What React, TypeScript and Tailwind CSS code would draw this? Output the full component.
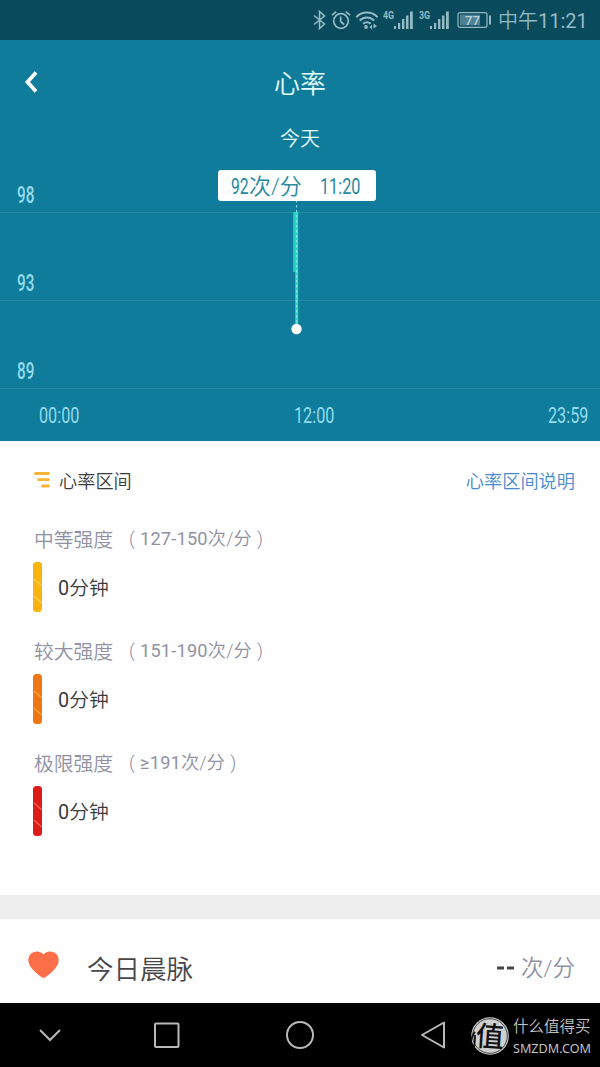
import React from "react";

const SANS = "font-[Roboto,'Noto_Sans_CJK_SC',sans-serif]";

function Signal({ label }: { label: string }) {
  return (
    <svg width="31" height="22" viewBox="0 0 31 22" className="shrink-0" fill="currentColor">
      <text x="0" y="9.5" fontSize="11.5" fontWeight="700" textLength="11" lengthAdjust="spacingAndGlyphs">
        {label}
      </text>
      <rect x="11" y="17" width="2" height="3" />
      <rect x="15" y="14" width="2.2" height="6" />
      <rect x="19" y="10" width="2.4" height="10" />
      <rect x="23" y="6.5" width="2.5" height="13.5" />
      <rect x="27" y="2.5" width="2.8" height="17.5" />
    </svg>
  );
}

function StatusBar() {
  return (
    <div className="flex h-10 w-full shrink-0 items-center bg-[#094b5d] pl-[313px] text-[#93bac5]">
      <svg width="13" height="20" viewBox="0 0 13 20" fill="none" stroke="currentColor" strokeWidth="1.6">
        <path d="M1 5.5 11.5 14 6.5 18.5V1.5L11.5 6 1 14.5" />
      </svg>
      <svg width="20" height="20" viewBox="0 0 20 20" fill="none" stroke="currentColor" strokeWidth="1.7" className="ml-[5px]">
        <circle cx="10" cy="11" r="7.3" />
        <path d="M9.7 6.5v5l3.3 3M1 5.2 5.2 1.6M19 5.2 14.8 1.6" />
      </svg>
      <svg width="24" height="20" viewBox="0 0 24 20" fill="none" stroke="currentColor" strokeWidth="2" className="ml-[4px]">
        <path d="M1.2 7.2C7 .9 16.8.9 22.6 7.2M4.6 10.6c4-4.2 10.6-4.2 14.6 0M8.2 13.8c2-2.1 5.4-2.1 7.4 0" />
        <circle cx="11" cy="17" r="1.9" fill="currentColor" stroke="none" />
        <path d="M17 14.5v5l-2.500-2.500zM18.500 13.500v5l3.500-2.500z" fill="currentColor" stroke="none" />
      </svg>
      <div className="ml-[4px] flex gap-[5px] font-[Roboto,sans-serif]">
        <Signal label="4G" />
        <Signal label="3G" />
      </div>
      <svg width="35" height="18" viewBox="0 0 35 18" className="ml-[7px] font-[Roboto,sans-serif]">
        <rect x="1" y="1.7" width="29" height="14.6" rx="2" fill="none" stroke="currentColor" strokeWidth="1.2" />
        <rect x="3" y="3.6" width="20" height="10.8" fill="#4b8191" />
        <text x="8" y="13.8" fontSize="13.5" fontWeight="500" fill="#b5d0d8" textLength="15" lengthAdjust="spacingAndGlyphs">77</text>
        <rect x="32" y="4.5" width="2" height="9" fill="currentColor" />
      </svg>
      <span className="mt-[2px] ml-[6px] text-[20px] leading-10 font-[350] whitespace-nowrap">
        中午<span className="font-normal">11:21</span>
      </span>
    </div>
  );
}

function GridRow({ value, first = false }: { value: string; first?: boolean }) {
  return (
    <div
      className={`flex items-end border-b border-[#2488a5] pb-[5px] pl-[17px] text-[23.5px] leading-6 text-[#93dbec] ${first ? "h-[60px]" : "h-[88px]"}`}
    >
      <span className="origin-left scale-x-[0.65] font-medium">{value}</span>
    </div>
  );
}

function AxisTime({ children }: { children: string }) {
  return (
    <span className="w-[41px] whitespace-nowrap">
      <span className="inline-block origin-left scale-x-[0.72]">{children}</span>
    </span>
  );
}

function Chart() {
  return (
    <div className="relative flex h-[288px] w-full flex-col">
      <GridRow value="98" first />
      <GridRow value="93" />
      <GridRow value="89" />
      <div className="flex h-[52px] items-center justify-between pt-px pr-[11px] pl-[39px] text-[22.5px] text-[#93dbec]">
        <AxisTime>00:00</AxisTime>
        <AxisTime>12:00</AxisTime>
        <AxisTime>23:59</AxisTime>
      </div>
      <svg className="absolute top-[47px] left-[284px]" width="24" height="138" viewBox="0 0 24 138" fill="none">
        <path d="M11 12v60" stroke="#24cfc5" strokeWidth="3.6" />
        <path d="M12.7 12v117" stroke="#2bd8c8" strokeWidth="3" />
        <path d="M12.6 0v129" stroke="#8bebdf" strokeWidth="1" strokeDasharray="2.5 2.5" />
        <circle cx="12.5" cy="129" r="5.2" fill="#fff" />
      </svg>
      <div className="absolute top-[17px] left-[218px] flex h-[31px] w-[158px] items-center rounded-[3px] bg-white pt-[2px] pl-[13px] text-[22.5px] leading-[31px] whitespace-nowrap text-[#26899e]">
        <span className="w-[18px]"><span className="inline-block origin-left scale-x-[0.7]">92</span></span>
        <span className="w-[74px] text-[22px] font-[350]">次/分</span>
        <span className="inline-block origin-left scale-x-[0.72]">11:20</span>
      </div>
    </div>
  );
}

type ZoneProps = { name: string; range: string; bar: string; light: string };

function Zone({ name, range, bar, light }: ZoneProps) {
  return (
    <div className="h-[112px] pl-[33px]">
      <div className="flex h-[30px] items-center whitespace-nowrap text-[#9092a3]">
        <span className="w-[92px] pt-[3px] pl-px text-[19.8px] font-[350]">{name}</span>
        <span className="flex text-[18.2px] font-[350]">
          <span className="w-[15px] pl-[4px]">(</span>
          <span className="tracking-[0.2px]">
            <span className="font-normal">{range}</span>
            次/分
          </span>
          <span className="ml-[5px]">)</span>
        </span>
      </div>
      <div className="mt-[8px] flex h-[50px] items-center">
        <svg width="9" height="50" viewBox="0 0 9 50">
          <rect width="9" height="50" rx="3.5" fill={bar} />
          <path d="M1 17l7.5 6.5M1 34l7.5 7" stroke={light} strokeWidth="1.2" />
        </svg>
        <span className="mt-[4px] ml-[16px] text-[19.8px] font-[350] text-[#3c3c40]">
          <span className="font-normal">0</span>分钟
        </span>
      </div>
    </div>
  );
}

function NavBar() {
  return (
    <div className="flex h-[64px] shrink-0 items-center bg-black text-[#b9b9b9]">
      <svg width="460" height="64" viewBox="0 0 460 64" fill="none" stroke="currentColor" strokeWidth="2">
        <path d="m40 27 10 10 10-10" />
        <rect x="155" y="20.5" width="23.5" height="23.5" rx="1" />
        <circle cx="300" cy="32" r="13" />
        <path d="M444 19.5v25l-22-12.5z" strokeLinejoin="round" />
      </svg>
      <svg width="42" height="42" viewBox="0 0 42 42" className="ml-[9px] shrink-0 font-['Noto_Sans_CJK_SC',sans-serif]">
        <circle cx="21" cy="22" r="18.8" fill="#cfcfcf" />
        <circle cx="21" cy="22" r="17.3" fill="none" stroke="#222" strokeWidth=".8" />
        <path d="M2 27c1-4 2-7 4-9M5 33c1-4 1-8 1-12" stroke="#111" strokeWidth="1.8" fill="none" />
        <text x="7" y="32.5" fontSize="28" fontWeight="500" fill="#111" transform="rotate(4 21 22)">值</text>
      </svg>
      <div className="mt-[5px] ml-[2px] flex flex-col whitespace-nowrap text-[#c3c3c3]">
        <span className="text-[15.5px] leading-[21px] font-[350]">什么值得买</span>
        <span className="origin-left scale-x-[0.97] font-['Noto_Sans',sans-serif] text-[13px] leading-[20px]">SMZDM.COM</span>
      </div>
    </div>
  );
}

export default function App() {
  return (
    <div className={`flex h-[1067px] w-[600px] flex-col overflow-hidden bg-white ${SANS}`}>
      <StatusBar />
      <div className="flex h-[401px] shrink-0 flex-col bg-[#0f7c9b] text-[#e4fbff]">
        <div className="flex h-[82px] items-center px-[24px]">
          <svg width="14" height="24" viewBox="0 0 14 24" fill="none" stroke="#fff" strokeWidth="3.8" className="mt-[2px]">
            <path d="M12 2.5 3.5 12l8.500 9.500" />
          </svg>
          <h1 className="mt-[6px] flex-1 pr-[14px] text-center text-[26px] leading-none font-[350]">心率</h1>
        </div>
        <div className="flex h-[31px] items-center justify-center pt-[3px] text-[20px] leading-none font-[350]">今天</div>
        <Chart />
      </div>
      <div className="h-[454px] shrink-0 bg-[#fefefe]">
        <div className="flex h-[78px] items-center pr-[25px] pl-[34px]">
          <svg width="16" height="16" viewBox="0 0 16 16" fill="none" stroke="#f5b536" strokeWidth="2.8" strokeLinecap="round">
            <path d="M1.5 1.5h13M4.5 7.7h10M8.5 14h6" />
          </svg>
          <span className="mt-[3px] ml-[9px] text-[18.2px] font-[350] text-[#3c3c40]">心率区间</span>
          <span className="mt-[3px] ml-auto text-[18.2px] font-[350] text-[#468bd0]">心率区间说明</span>
        </div>
        <div className="mt-[5px]">
          <Zone name="中等强度" range="127-150" bar="#f9b414" light="#ffd052" />
          <Zone name="较大强度" range="151-190" bar="#ed7615" light="#ffa13f" />
          <Zone name="极限强度" range="≥191" bar="#dc1c1b" light="#ff6651" />
        </div>
      </div>
      <div className="h-[24px] shrink-0 bg-[#eeeeee]" />
      <div className="flex h-[84px] shrink-0 items-center bg-[#fefefe] pr-[25px] pl-[28px]">
        <svg width="31" height="27" viewBox="0 0 31 27" className="mt-[6px]">
          <path d="M15.5 3.5C12-.8 5.5-.2 2.2 3.6-1 8 .2 13 3.5 17c3 3.6 7 7 10.5 9.4 1 .6 2 .6 3 0C20.5 24 24.5 20.6 27.5 17c3.3-4 4.5-9 1.3-13.4C25.5-.2 19-.8 15.5 3.5z" fill="#fd6f49" />
        </svg>
        <span className="mt-[19px] ml-[28px] text-[26.5px] leading-none font-[350] text-[#46464a]">今日晨脉</span>
        <span className="mt-[14px] ml-auto flex items-center text-[22.5px] leading-none font-[350] text-[#9092a3]">
          <svg width="17" height="4" viewBox="0 0 17 4" className="mr-[7px]"><path d="M0 2h7M10 2h7" stroke="#46464a" strokeWidth="3" /></svg>
          次/分
        </span>
      </div>
      <NavBar />
    </div>
  );
}
